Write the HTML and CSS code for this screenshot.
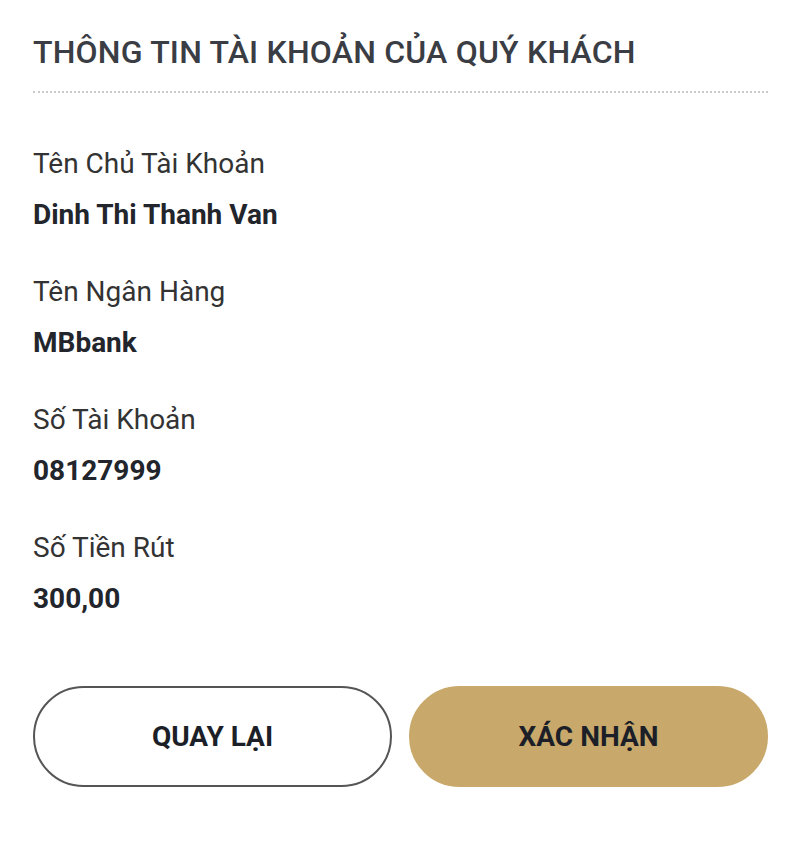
FILE: index.html
```html
<!DOCTYPE html>
<html lang="vi">
<head>
<meta charset="utf-8">
<link rel="stylesheet" href="styles.css">
</head>
<body>
<div class="page">
  <h1 class="title">THÔNG TIN TÀI KHOẢN CỦA QUÝ KHÁCH</h1>
  <div class="divider"></div>
  <div class="fields">
    <div class="field">
      <div class="label">Tên Chủ Tài Khoản</div>
      <div class="value">Dinh Thi Thanh Van</div>
    </div>
    <div class="field">
      <div class="label">Tên Ngân Hàng</div>
      <div class="value">MBbank</div>
    </div>
    <div class="field">
      <div class="label">Số Tài Khoản</div>
      <div class="value">08127999</div>
    </div>
    <div class="field">
      <div class="label">Số Tiền Rút</div>
      <div class="value">300,00</div>
    </div>
  </div>
  <div class="actions">
    <button class="btn btn-outline">QUAY LẠI</button>
    <button class="btn btn-gold">XÁC NHẬN</button>
  </div>
</div>
</body>
</html>
```
FILE: styles.css
```css
html, body {
  margin: 0;
  padding: 0;
  background: #ffffff;
}
body {
  font-family: Roboto, "Noto Sans", sans-serif;
}
.page {
  padding: 31px 32px 0 33px;
}
.title {
  margin: 0;
  font-size: 32px;
  font-weight: 500;
  color: #3a3d44;
  line-height: 42px;
  letter-spacing: 0.2px;
}
.divider {
  margin-top: 18px;
  height: 0;
  border-top: 2px dotted #cacaca;
}
.fields {
  margin-top: 56px;
  display: flex;
  flex-direction: column;
  gap: 47px;
}
.field {
  display: flex;
  flex-direction: column;
  gap: 21px;
}
.label {
  font-size: 28px;
  line-height: 30px;
  color: #333;
}
.value {
  font-size: 28px;
  line-height: 30px;
  font-weight: 700;
  color: #22252b;
}
.actions {
  margin-top: 72px;
  display: flex;
  gap: 17px;
}
.btn {
  flex: 1;
  height: 101px;
  border-radius: 51px;
  font-family: Roboto, "Noto Sans", sans-serif;
  font-size: 28px;
  font-weight: 700;
  color: #1c1f27;
  cursor: pointer;
}
.btn-outline {
  background: #ffffff;
  border: 2px solid #555;
}
.btn-gold {
  background: #c9a96b;
  border: 2px solid #c9a96b;
}
```
